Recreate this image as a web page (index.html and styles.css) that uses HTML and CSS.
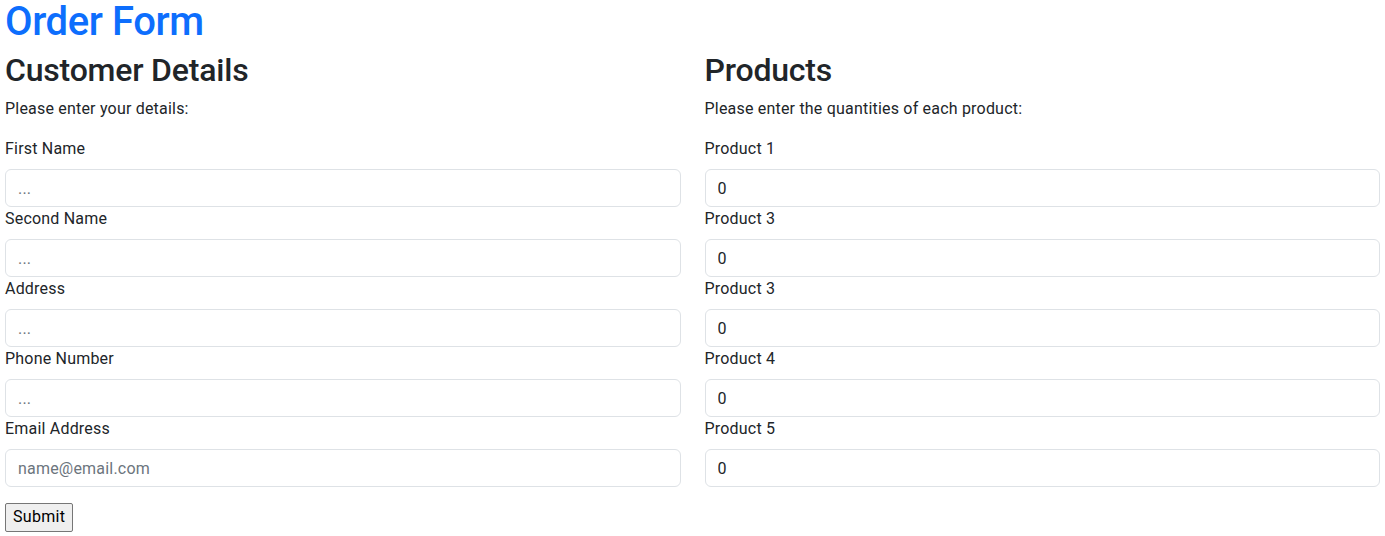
FILE: index.html
```html
<!DOCTYPE html>
<html lang="en">
<head>
<meta charset="utf-8">
<title>Order Form</title>
<link rel="stylesheet" href="styles.css">
</head>
<body>
<div class="page">
  <h1 class="title">Order Form</h1>
  <form class="order-form">
    <div class="columns">
      <div class="col">
        <h2 class="section-title">Customer Details</h2>
        <p class="intro">Please enter your details:</p>
        <label class="field-label" for="fn">First Name</label>
        <input class="field" id="fn" type="text" placeholder="...">
        <label class="field-label" for="sn">Second Name</label>
        <input class="field" id="sn" type="text" placeholder="...">
        <label class="field-label" for="ad">Address</label>
        <input class="field" id="ad" type="text" placeholder="...">
        <label class="field-label" for="ph">Phone Number</label>
        <input class="field" id="ph" type="text" placeholder="...">
        <label class="field-label" for="em">Email Address</label>
        <input class="field" id="em" type="email" placeholder="name@email.com">
      </div>
      <div class="col">
        <h2 class="section-title">Products</h2>
        <p class="intro">Please enter the quantities of each product:</p>
        <label class="field-label" for="p1">Product 1</label>
        <input class="field" id="p1" type="text" value="0">
        <label class="field-label" for="p2">Product 3</label>
        <input class="field" id="p2" type="text" value="0">
        <label class="field-label" for="p3">Product 3</label>
        <input class="field" id="p3" type="text" value="0">
        <label class="field-label" for="p4">Product 4</label>
        <input class="field" id="p4" type="text" value="0">
        <label class="field-label" for="p5">Product 5</label>
        <input class="field" id="p5" type="text" value="0">
      </div>
    </div>
    <button class="submit" type="submit">Submit</button>
  </form>
</div>
</body>
</html>
```
FILE: styles.css
```css
* { box-sizing: border-box; }
body {
  margin: 0;
  font-family: Roboto, "Liberation Sans", sans-serif;
  font-size: 16px;
  line-height: 1.5;
  letter-spacing: 0.2px;
  color: #212529;
  background: #fff;
}
.page {
  padding: 0 5px;
}
.title {
  margin: 0 0 7px;
  font-size: 40px;
  font-weight: 500;
  line-height: 44px;
  letter-spacing: -0.4px;
  color: #0d6efd;
}
.columns {
  display: grid;
  grid-template-columns: 1fr 1fr;
  column-gap: 24px;
}
.col {
  display: flex;
  flex-direction: column;
}
.section-title {
  margin: 0 0 8px;
  font-size: 32px;
  font-weight: 500;
  line-height: 1.2;
  letter-spacing: -0.2px;
}
.intro {
  margin: 0 0 16px;
  font-size: 16px;
}
.field-label {
  display: block;
  margin-bottom: 8px;
}
.field {
  display: block;
  width: 100%;
  height: 38px;
  padding: 6px 12px;
  font: inherit;
  font-size: 16px;
  line-height: 1.5;
  letter-spacing: 0.2px;
  color: #212529;
  background: #fff;
  border: 1px solid #dee2e6;
  border-radius: 6px;
  outline: none;
}
.field::placeholder {
  color: #6c757d;
  opacity: 1;
}
.submit {
  margin-top: 16px;
  font: inherit;
  font-size: 16px;
  line-height: 1.5;
  letter-spacing: 0.3px;
  padding: 1px 7px 2px;
  color: #000;
  background: #efefef;
  border: 1px solid #767676;
  border-radius: 2px;
}
```
